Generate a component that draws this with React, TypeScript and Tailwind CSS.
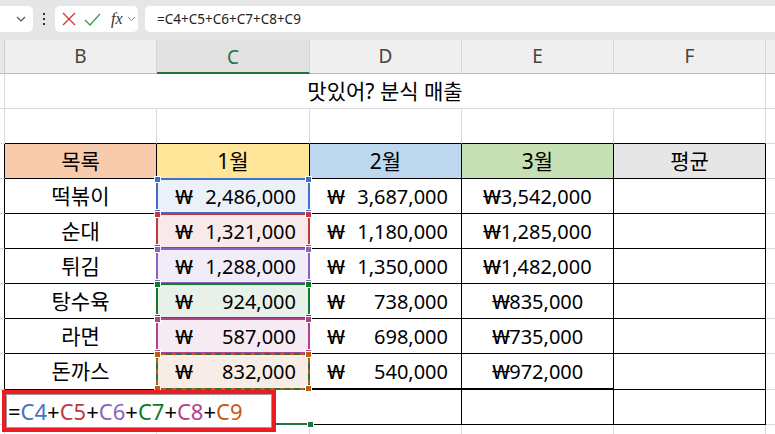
import React from "react";

const FONT = "font-['Noto_Sans','Noto_Sans_CJK_KR',sans-serif]";
const WON = "inline-block origin-left scale-x-[1.35] text-[20px]";

type Item = { name: string; c: string; d: string; e: string };

const items: Item[] = [
  { name: "떡볶이", c: "2,486,000", d: "3,687,000", e: "3,542,000" },
  { name: "순대", c: "1,321,000", d: "1,180,000", e: "1,285,000" },
  { name: "튀김", c: "1,288,000", d: "1,350,000", e: "1,482,000" },
  { name: "탕수육", c: "924,000", d: "738,000", e: "835,000" },
  { name: "라면", c: "587,000", d: "698,000", e: "735,000" },
  { name: "돈까스", c: "832,000", d: "540,000", e: "972,000" },
];

const ranges = [
  { fill: "bg-[#ebf0f9]", border: "border-[#3f6fc6]", handle: "bg-[#3f6fc6]" },
  { fill: "bg-[#f9e9ea]", border: "border-[#c2393e]", handle: "bg-[#c2393e]" },
  { fill: "bg-[#f0edf8]", border: "border-[#8a64bf]", handle: "bg-[#8a64bf]" },
  { fill: "bg-[#e7f1e9]", border: "border-[#127a2e]", handle: "bg-[#127a2e]" },
  { fill: "bg-[#f6eaf3]", border: "border-[#b1428b]", handle: "bg-[#b1428b]" },
  { fill: "bg-[#f8ece6]", border: "border-[#c55a11]", handle: "bg-[#c55a11]" },
];

function Handles({ color }: { color: string }) {
  const h = "absolute w-[7px] h-[7px] border border-white " + color;
  return (
    <>
      <div className={h + " -left-[3px] -top-[3px]"} />
      <div className={h + " -right-[3px] -top-[3px]"} />
      <div className={h + " -left-[3px] -bottom-[3px]"} />
      <div className={h + " -right-[3px] -bottom-[3px]"} />
    </>
  );
}

export default function App() {
  return (
    <div className={"w-[775px] h-[434px] overflow-hidden bg-white relative " + FONT}>
      {/* Formula bar */}
      <div className="h-[40px] bg-[#e6e6e6] flex items-start pt-[6px]">
        <div className="h-[26px] w-[33px] bg-white rounded-r-[5px] flex items-center justify-end pr-[7px]">
          <svg width="10" height="6" viewBox="0 0 10 6">
            <path d="M1 1l4 4 4-4" stroke="#555" fill="none" strokeWidth="1.2" />
          </svg>
        </div>
        <div className="w-[22px] h-[26px] flex flex-col items-center justify-center gap-[3px]">
          <span className="w-[2px] h-[2px] bg-[#333]" />
          <span className="w-[2px] h-[2px] bg-[#333]" />
          <span className="w-[2px] h-[2px] bg-[#333]" />
        </div>
        <div className="h-[26px] w-[83px] bg-white rounded-[5px] flex items-center pl-[6px]">
          <svg width="14" height="14" viewBox="0 0 14 14" className="ml-[1px]">
            <path d="M1 1L13 13M13 1L1 13" stroke="#d13438" strokeWidth="1.3" fill="none" />
          </svg>
          <svg width="17" height="13" viewBox="0 0 17 13" className="ml-[8px]">
            <path d="M1 7L6 12L16 1" stroke="#3f9a4f" strokeWidth="1.3" fill="none" />
          </svg>
          <span className="ml-[10px] font-['Liberation_Serif',serif] italic text-[16px] text-[#333] leading-none">fx</span>
          <svg width="9" height="6" viewBox="0 0 9 6" className="ml-[4px]">
            <path d="M1 1l3.5 3.5L8 1" stroke="#888" fill="none" strokeWidth="1" />
          </svg>
        </div>
        <div className="ml-[7px] flex-1 h-[26px] bg-white rounded-l-[5px] flex items-center pl-[12px] text-[13.5px] text-[#222]">
          =C4+C5+C6+C7+C8+C9
        </div>
      </div>

      {/* Sheet */}
      <div className="grid grid-cols-[5px_152px_153px_152px_152px_152px_1fr] grid-rows-[34px_35px_35px_35px_35px_35px_35px_35px_35px_36px_35px_1fr] h-[394px]">
        {/* Column headers */}
        <div className="bg-[#e8e8e8] border-r border-b border-r-[#cfcfcf] border-b-[#bdbdbd]" />
        <div className="bg-[#efefef] border-r border-b border-r-[#d6d6d6] border-b-[#bdbdbd] flex items-center justify-center text-[19px] text-[#444]">B</div>
        <div className="bg-[#e1e1e1] border-r border-b-2 border-r-[#d6d6d6] border-b-[#217346] flex items-center justify-center text-[19px] text-[#217346] pt-[2px]">C</div>
        <div className="bg-[#efefef] border-r border-b border-r-[#d6d6d6] border-b-[#bdbdbd] flex items-center justify-center text-[19px] text-[#444]">D</div>
        <div className="bg-[#efefef] border-r border-b border-r-[#d6d6d6] border-b-[#bdbdbd] flex items-center justify-center text-[19px] text-[#444]">E</div>
        <div className="bg-[#efefef] border-r border-b border-r-[#d6d6d6] border-b-[#bdbdbd] flex items-center justify-center text-[19px] text-[#444]">F</div>
        <div className="bg-[#efefef] border-b border-b-[#bdbdbd]" />

        {/* Row 1: title */}
        <div className="border-r border-b border-[#dadada]" />
        <div className="col-span-5 border-r border-b border-[#dadada] flex items-center justify-center text-[21px] text-black pt-[1px]">
          맛있어? 분식 매출
        </div>
        <div className="border-b border-[#dadada]" />

        {/* Row 2: empty */}
        <div className="border-r border-b border-[#dadada]" />
        <div className="border-r border-b border-r-[#dadada] border-b-black" />
        <div className="border-r border-b border-r-[#dadada] border-b-black" />
        <div className="border-r border-b border-r-[#dadada] border-b-black" />
        <div className="border-r border-b border-r-[#dadada] border-b-black" />
        <div className="border-r border-b border-r-[#dadada] border-b-black" />
        <div className="border-b border-[#dadada]" />

        {/* Row 3: header */}
        <div className="border-r border-b border-r-black border-b-[#dadada]" />
        <div className="bg-[#f8cbad] border-r border-b border-black flex items-center justify-center text-[21px] text-black pt-[1px]">목록</div>
        <div className="bg-[#ffe699] border-r border-b border-black flex items-center justify-center text-[21px] text-black pt-[1px]">1월</div>
        <div className="bg-[#bdd7ee] border-r border-b border-black flex items-center justify-center text-[21px] text-black pt-[1px]">2월</div>
        <div className="bg-[#c6e0b4] border-r border-b border-black flex items-center justify-center text-[21px] text-black pt-[1px]">3월</div>
        <div className="bg-[#e7e6e6] border-r border-b border-black flex items-center justify-center text-[21px] text-black pt-[1px]">평균</div>
        <div className="border-b border-[#dadada]" />

        {/* Rows 4-9 */}
        {items.map((it, i) => {
          const r = ranges[i];
          const last = i === items.length - 1;
          return (
            <React.Fragment key={it.name}>
              <div className="border-r border-b border-r-black border-b-[#dadada]" />
              <div className="border-r border-b border-black flex items-center justify-center text-[21px] text-black pt-[1px]">
                {it.name}
              </div>
              <div className={"relative border-r border-b border-black flex items-center justify-between pl-[18px] pr-[13px] text-[20px] text-black pt-[1px] " + r.fill}>
                <span className={WON}>₩</span>
                <span>{it.c}</span>
                <div className={"absolute -left-px -top-px -right-px -bottom-px border-2 " + r.border} />
                {last && (
                  <div className="absolute -left-px -top-px -right-px -bottom-px border-2 border-dashed border-[#217346]" />
                )}
                <Handles color={r.handle} />
              </div>
              <div className={"border-r border-black flex items-center justify-between pl-[17px] pr-[13px] text-[20px] text-black pt-[1px] " + (last ? "border-b-2" : "border-b")}>
                <span className={WON}>₩</span>
                <span>{it.d}</span>
              </div>
              <div className={"border-r border-black flex items-center justify-center text-[20px] text-black pt-[1px] " + (last ? "border-b-2" : "border-b")}>
                <span className={WON + " mr-[4px]"}>₩</span>
                <span>{it.e}</span>
              </div>
              <div className="border-r border-b border-black" />
              <div className="border-b border-[#dadada]" />
            </React.Fragment>
          );
        })}

        {/* Row 10: formula row */}
        <div className="border-r border-b border-[#dadada]" />
        <div className="border-r border-b border-[#dadada]" />
        <div className="relative border-b border-[#dadada]">
          <div className="absolute -left-px right-[-1px] bottom-[-1px] h-[2px] bg-[#217346]" />
          <div className="absolute right-[-4px] bottom-[-4px] w-[7px] h-[7px] bg-[#217346] border border-white" />
        </div>
        <div className="border-r border-b border-black" />
        <div className="border-r border-b border-black" />
        <div className="border-r border-b border-black" />
        <div className="border-b border-[#dadada]" />

        {/* Row 11 partial */}
        <div className="border-r border-[#dadada]" />
        <div className="border-r border-[#dadada]" />
        <div className="border-r border-[#dadada]" />
        <div className="border-r border-[#dadada]" />
        <div className="border-r border-[#dadada]" />
        <div className="border-r border-[#dadada]" />
        <div />
      </div>

      {/* In-cell edit box with red annotation */}
      <div className="absolute left-[2px] top-[390px] w-[274px] h-[42px] border-[4px] border-[#ed1c24] bg-white">
        <div className="w-full h-full border border-[#9a9a9a] flex items-center pl-[1px] text-[22px] leading-none">
          <span className="text-black">=</span>
          <span className="text-[#4472c4]">C4</span>
          <span className="text-black">+</span>
          <span className="text-[#c0393e]">C5</span>
          <span className="text-black">+</span>
          <span className="text-[#8a64bf]">C6</span>
          <span className="text-black">+</span>
          <span className="text-[#0f7b2c]">C7</span>
          <span className="text-black">+</span>
          <span className="text-[#b1428b]">C8</span>
          <span className="text-black">+</span>
          <span className="text-[#c55a11]">C9</span>
        </div>
      </div>
    </div>
  );
}
